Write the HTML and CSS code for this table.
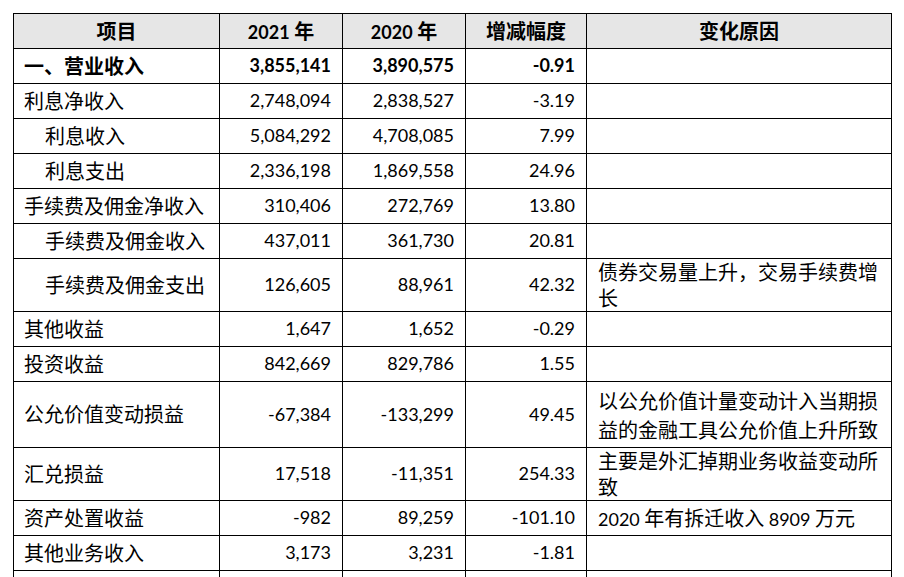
FILE: index.html
```html
<!DOCTYPE html>
<html lang="zh-CN">
<head>
<meta charset="utf-8">
<title>营业收入变动表</title>
<link rel="stylesheet" href="styles.css">
</head>
<body>
<table class="fin">
  <colgroup>
    <col class="c-item"><col class="c-num"><col class="c-num"><col class="c-chg"><col class="c-reason">
  </colgroup>
  <thead>
    <tr class="r1">
      <th>项目</th><th><span class="lat">2021</span> 年</th><th><span class="lat">2020</span> 年</th><th>增减幅度</th><th>变化原因</th>
    </tr>
  </thead>
  <tbody>
    <tr class="r1 strong">
      <td class="item">一、营业收入</td><td class="num">3,855,141</td><td class="num">3,890,575</td><td class="num">-0.91</td><td class="reason"></td>
    </tr>
    <tr class="r1">
      <td class="item">利息净收入</td><td class="num">2,748,094</td><td class="num">2,838,527</td><td class="num">-3.19</td><td class="reason"></td>
    </tr>
    <tr class="r1">
      <td class="item sub">利息收入</td><td class="num">5,084,292</td><td class="num">4,708,085</td><td class="num">7.99</td><td class="reason"></td>
    </tr>
    <tr class="r1">
      <td class="item sub">利息支出</td><td class="num">2,336,198</td><td class="num">1,869,558</td><td class="num">24.96</td><td class="reason"></td>
    </tr>
    <tr class="r1">
      <td class="item">手续费及佣金净收入</td><td class="num">310,406</td><td class="num">272,769</td><td class="num">13.80</td><td class="reason"></td>
    </tr>
    <tr class="r1">
      <td class="item sub">手续费及佣金收入</td><td class="num">437,011</td><td class="num">361,730</td><td class="num">20.81</td><td class="reason"></td>
    </tr>
    <tr class="r2">
      <td class="item sub">手续费及佣金支出</td><td class="num">126,605</td><td class="num">88,961</td><td class="num">42.32</td><td class="reason">债券交易量上升，交易手续费增<br>长</td>
    </tr>
    <tr class="r1">
      <td class="item">其他收益</td><td class="num">1,647</td><td class="num">1,652</td><td class="num">-0.29</td><td class="reason"></td>
    </tr>
    <tr class="r1">
      <td class="item">投资收益</td><td class="num">842,669</td><td class="num">829,786</td><td class="num">1.55</td><td class="reason"></td>
    </tr>
    <tr class="r3">
      <td class="item">公允价值变动损益</td><td class="num">-67,384</td><td class="num">-133,299</td><td class="num">49.45</td><td class="reason wide">以公允价值计量变动计入当期损<br>益的金融工具公允价值上升所致</td>
    </tr>
    <tr class="r2">
      <td class="item">汇兑损益</td><td class="num">17,518</td><td class="num">-11,351</td><td class="num">254.33</td><td class="reason">主要是外汇掉期业务收益变动所<br>致</td>
    </tr>
    <tr class="r1">
      <td class="item">资产处置收益</td><td class="num">-982</td><td class="num">89,259</td><td class="num">-101.10</td><td class="reason"><span class="lat">2020</span> 年有拆迁收入 <span class="lat">8909</span> 万元</td>
    </tr>
    <tr class="r1">
      <td class="item">其他业务收入</td><td class="num">3,173</td><td class="num">3,231</td><td class="num">-1.81</td><td class="reason"></td>
    </tr>
    <tr class="r1">
      <td class="item"></td><td class="num"></td><td class="num"></td><td class="num"></td><td class="reason"></td>
    </tr>
  </tbody>
</table>
</body>
</html>
```

FILE: styles.css
```css
html, body {
  margin: 0;
  padding: 0;
  background: #ffffff;
}

body {
  padding: 13px 0 0 13px;
  overflow: hidden;
  height: 564px;
}

.fin {
  border-collapse: separate;
  border-spacing: 0;
  table-layout: fixed;
  width: 878px;
  border-top: 1px solid #000;
  border-left: 1px solid #000;
  color: #000;
  font-family: "Noto Sans CJK SC", sans-serif;
  font-size: 20px;
}

.c-item { width: 206px; }
.c-num { width: 123px; }
.c-chg { width: 121px; }
.c-reason { width: 305px; }

.fin th,
.fin td {
  border-right: 1px solid #000;
  border-bottom: 1px solid #000;
  padding: 0 0 2px 0;
  vertical-align: middle;
  white-space: nowrap;
}

.fin th {
  background: #e6e6e6;
  font-weight: 700;
  text-align: center;
}

.lat {
  font-family: "Lato", sans-serif;
  font-size: 18px;
}

.r1 th, .r1 td { height: 32px; }
.r2 td { height: 50px; }
.r3 td { height: 63px; }

.item {
  padding-left: 10px !important;
  text-align: left;
}

.item.sub {
  padding-left: 31px !important;
}

.num {
  font-family: "Lato", sans-serif;
  font-size: 18px;
  text-align: right;
  padding-right: 11px !important;
}

.fin td.reason {
  padding: 0 0 0 11px;
  line-height: 26px;
  text-align: left;
}

.r1 td.reason { height: 34px; }
.r2 td.reason { height: 52px; }
.r3 td.reason { height: 65px; line-height: 29px; }

.strong td {
  font-weight: 700;
}
```
